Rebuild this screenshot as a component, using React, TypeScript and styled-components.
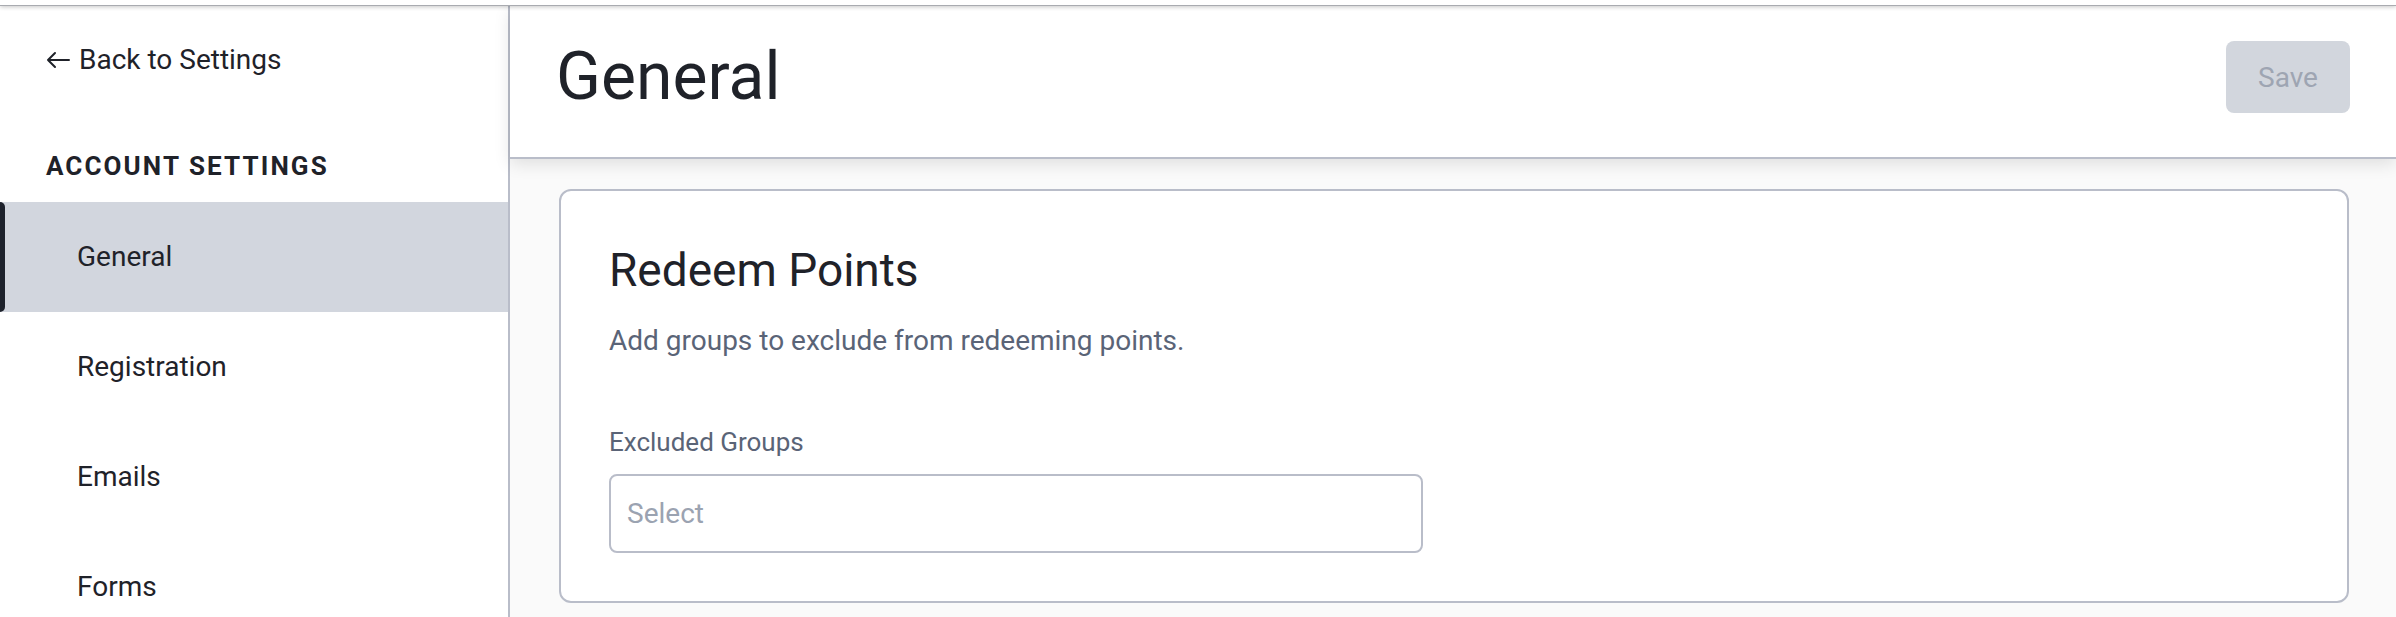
import React from "react";
import styled, { createGlobalStyle } from "styled-components";

const GlobalStyle = createGlobalStyle`
  html, body { margin: 0; padding: 0; height: 100%; }
  body {
    font-family: Roboto, "Noto Sans", Arial, sans-serif;
    background: #ffffff;
    color: #1f2229;
    overflow: hidden;
  }
  #root { height: 100%; }
  *, *::before, *::after { box-sizing: border-box; }
`;

const Page = styled.div`
  display: flex;
  flex-direction: column;
  height: 100vh;
`;

const TopEdge = styled.div`
  flex: none;
  height: 6px;
  background: #ffffff;
  border-bottom: 1px solid #a9abb0;
  box-shadow: 0 1px 4px rgba(0, 0, 0, 0.22);
  position: relative;
  z-index: 3;
`;

const Body = styled.div`
  flex: 1;
  display: flex;
  min-height: 0;
`;

const Sidebar = styled.aside`
  flex: none;
  width: 510px;
  background: #ffffff;
  border-right: 2px solid #b9bdc9;
  padding-top: 34px;
  display: flex;
  flex-direction: column;
`;

const BackLink = styled.a`
  display: flex;
  align-items: center;
  gap: 9px;
  height: 40px;
  padding-left: 46px;
  font-size: 28px;
  line-height: 40px;
  color: #1f2229;
  text-decoration: none;
`;

const SectionTitle = styled.h2`
  margin: 70px 0 0;
  padding-left: 46px;
  font-size: 26px;
  line-height: 32px;
  font-weight: 700;
  letter-spacing: 2.1px;
  text-transform: uppercase;
  color: #1f2229;
`;

const NavList = styled.nav`
  margin-top: 20px;
  display: flex;
  flex-direction: column;
`;

const NavItem = styled.a<{ $active?: boolean }>`
  position: relative;
  display: flex;
  align-items: center;
  height: 110px;
  padding-left: 77px;
  font-size: 28px;
  line-height: 40px;
  color: #1f2229;
  text-decoration: none;
  background: ${(p) => (p.$active ? "#d2d6de" : "transparent")};

  &::before {
    content: "";
    display: ${(p) => (p.$active ? "block" : "none")};
    position: absolute;
    left: 0;
    top: 0;
    bottom: 0;
    width: 5px;
    background: #1e222c;
    border-radius: 0 5px 5px 0;
  }
`;

const Main = styled.main`
  flex: 1;
  min-width: 0;
  display: flex;
  flex-direction: column;
  background: #fafafa;
`;

const Header = styled.header`
  position: relative;
  z-index: 2;
  display: flex;
  justify-content: space-between;
  align-items: center;
  padding: 31px 46px 40px 46px;
  background: #ffffff;
  border-bottom: 2px solid #b9bdc9;
  box-shadow: 0 5px 16px rgba(0, 0, 0, 0.11);
`;

const PageTitle = styled.h1`
  margin: 0;
  font-size: 66px;
  line-height: 80px;
  font-weight: 400;
  color: #1f2229;
`;

const SaveButton = styled.button`
  width: 124px;
  height: 72px;
  border: none;
  border-radius: 8px;
  background: #d2d6dd;
  color: #9ea5b2;
  font-family: inherit;
  font-size: 28px;
  cursor: not-allowed;
`;

const Content = styled.div`
  padding: 30px 47px 0 49px;
`;

const Card = styled.section`
  background: #ffffff;
  border: 2px solid #b9bdc9;
  border-radius: 12px;
  padding: 51px 48px 48px;
  display: flex;
  flex-direction: column;
  align-items: flex-start;
`;

const CardTitle = styled.h3`
  margin: 0;
  font-size: 46px;
  line-height: 56px;
  font-weight: 400;
  color: #1f2229;
`;

const Description = styled.p`
  margin: 23px 0 0;
  font-size: 28px;
  line-height: 40px;
  color: #5a6477;
`;

const FieldLabel = styled.label`
  margin-top: 63px;
  font-size: 26px;
  line-height: 36px;
  color: #5a6477;
`;

const SelectBox = styled.div`
  margin-top: 14px;
  width: 814px;
  height: 79px;
  display: flex;
  align-items: center;
  padding: 0 16px;
  border: 2px solid #b9bdc9;
  border-radius: 8px;
  background: #ffffff;
  font-size: 28px;
  line-height: 40px;
  color: #9ba3b1;
`;

const ArrowLeft = () => (
  <svg width="24" height="18" viewBox="0 0 24 18" fill="none" aria-hidden="true">
    <path
      d="M23 9H2M9 2L2 9l7 7"
      stroke="#1f2229"
      strokeWidth="2"
      strokeLinecap="round"
      strokeLinejoin="round"
    />
  </svg>
);

const navItems = ["General", "Registration", "Emails", "Forms"];

export default function App() {
  return (
    <>
      <GlobalStyle />
      <Page>
        <TopEdge />
        <Body>
          <Sidebar>
            <BackLink href="#">
              <ArrowLeft />
              Back to Settings
            </BackLink>
            <SectionTitle>Account Settings</SectionTitle>
            <NavList>
              {navItems.map((item) => (
                <NavItem key={item} href="#" $active={item === "General"}>
                  {item}
                </NavItem>
              ))}
            </NavList>
          </Sidebar>
          <Main>
            <Header>
              <PageTitle>General</PageTitle>
              <SaveButton disabled>Save</SaveButton>
            </Header>
            <Content>
              <Card>
                <CardTitle>Redeem Points</CardTitle>
                <Description>Add groups to exclude from redeeming points.</Description>
                <FieldLabel>Excluded Groups</FieldLabel>
                <SelectBox role="combobox">Select</SelectBox>
              </Card>
            </Content>
          </Main>
        </Body>
      </Page>
    </>
  );
}
